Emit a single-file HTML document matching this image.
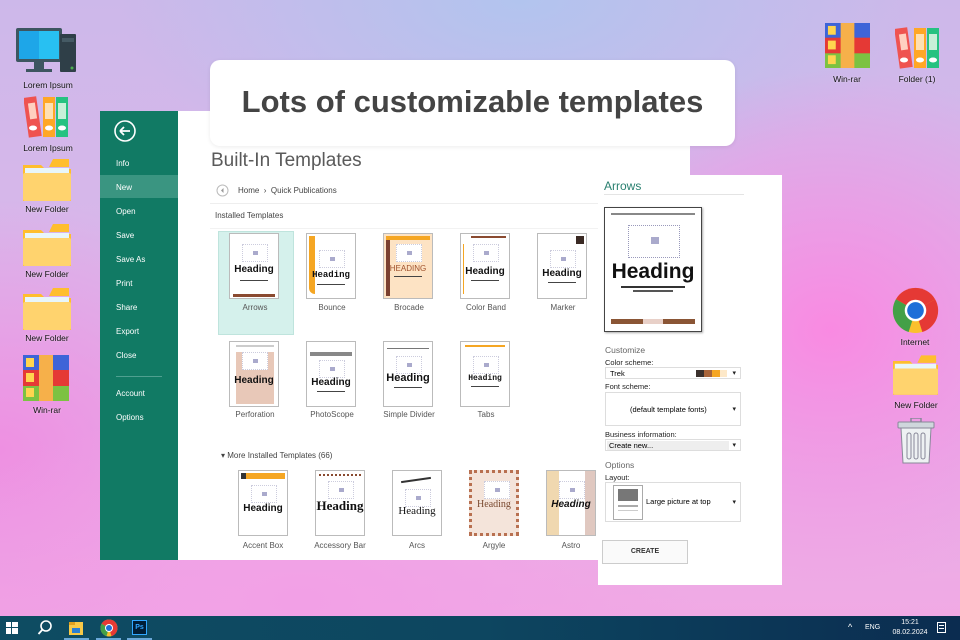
<!DOCTYPE html>
<html><head><meta charset="utf-8"><style>
*{margin:0;padding:0;box-sizing:border-box}
body{width:960px;height:640px;overflow:hidden;position:relative;font-family:"Liberation Sans",sans-serif;
background:
radial-gradient(ellipse 300px 260px at 830px 330px,#f98ae2 0%,rgba(249,138,226,0) 100%),
radial-gradient(ellipse 400px 200px at 300px 600px,#f2a0e6 0%,rgba(242,160,230,0) 100%),
radial-gradient(ellipse 300px 250px at 0px 450px,#ee90e2 0%,rgba(238,144,226,0) 100%),
radial-gradient(ellipse 400px 200px at 520px 0px,#b2c4ee 0%,rgba(178,196,238,0) 100%),
linear-gradient(180deg,#cdb8ea 0%,#dcb6ea 50%,#f2a8e4 100%);}
.abs{position:absolute}
.lbl{position:absolute;font-size:8.5px;color:#111;text-align:center;width:80px;text-shadow:0 0 2px rgba(255,255,255,.6)}
.side{left:100px;top:111px;width:78px;height:449px;background:#117a64}
.side div{position:absolute;left:16px;font-size:8px;color:#fff}
.main{left:178px;top:111px;width:512px;height:449px;background:#fff}
.t{position:absolute;width:50px;height:66px;border:1px solid #bbb;background:#fff;overflow:hidden}
.t .ph{position:absolute;left:12px;top:10px;width:26px;height:18px;border:1px dotted #ccd;}
.t .ph:after{content:"";position:absolute;left:10px;top:6px;width:5px;height:4px;background:#aac}
.t .h{position:absolute;left:0;right:0;top:30px;text-align:center;font-weight:bold;font-size:10px;font-family:"Liberation Sans Narrow","Liberation Sans",sans-serif;color:#111}
.t .s{position:absolute;left:10px;right:10px;top:44px;height:2px;background:#444}
.tl{position:absolute;width:76px;text-align:center;font-size:8px;color:#555}
.panel{left:598px;top:175px;width:184px;height:410px;background:#fff}
.pl{position:absolute;font-size:7.5px;color:#222}
.dd{position:absolute;border:1px solid #ddd;background:#fff}
.dd:after{content:"▾";position:absolute;right:4px;top:50%;transform:translateY(-50%);font-size:7px;color:#222}
</style></head><body>

<!-- desktop icons left -->
<svg class="abs" style="left:16px;top:26px" width="62" height="50" viewBox="0 0 62 50">
<rect x="0" y="2" width="46" height="34" rx="2" fill="#3d5560"/><rect x="3" y="5" width="40" height="28" fill="#1ea6e8"/><rect x="23" y="5" width="20" height="28" fill="#28c0f2"/>
<rect x="18" y="36" width="10" height="7" fill="#3d5560"/><rect x="10" y="43" width="26" height="3" fill="#3d5560"/>
<rect x="44" y="8" width="16" height="38" rx="1" fill="#2f3f48"/><rect x="46" y="12" width="12" height="4" fill="#455a64"/><circle cx="56" cy="42" r="1.5" fill="#4caf50"/></svg>
<div class="lbl" style="left:8px;top:80px">Lorem Ipsum</div>
<svg class="abs" style="left:24px;top:95px" width="46" height="44" viewBox="0 0 46 44">
<rect x="2" y="2" width="13" height="40" fill="#ef5350" transform="rotate(-8 8 22)"/><rect x="19" y="2" width="12" height="40" fill="#ffa726"/><rect x="32" y="2" width="12" height="40" fill="#26c281"/>
<rect x="21" y="8" width="8" height="16" fill="#ffe0b2"/><rect x="34" y="8" width="8" height="16" fill="#c8f0d8"/><rect x="5" y="8" width="7" height="16" fill="#ffd0c0" transform="rotate(-8 8 16)"/>
<ellipse cx="25" cy="33" rx="4" ry="2.5" fill="#fff"/><ellipse cx="38" cy="33" rx="4" ry="2.5" fill="#fff"/><ellipse cx="9" cy="33" rx="4" ry="2.5" fill="#fff"/></svg>
<div class="lbl" style="left:8px;top:143px">Lorem Ipsum</div>
<svg class="abs" style="left:23px;top:159px" width="48" height="42" viewBox="0 0 48 42"><path d="M0 6h18l4 4h26v32H0z" fill="#ffbe2e"/><path d="M30 0h16v8H26z" fill="#ffbe2e"/><rect x="2" y="9" width="44" height="6" fill="#e8f6fa"/><rect x="0" y="14" width="48" height="28" rx="2" fill="#ffd36e"/></svg>
<div class="lbl" style="left:7px;top:204px">New Folder</div>
<svg class="abs" style="left:23px;top:224px" width="48" height="42" viewBox="0 0 48 42"><path d="M0 6h18l4 4h26v32H0z" fill="#ffbe2e"/><path d="M30 0h16v8H26z" fill="#ffbe2e"/><rect x="2" y="9" width="44" height="6" fill="#e8f6fa"/><rect x="0" y="14" width="48" height="28" rx="2" fill="#ffd36e"/></svg>
<div class="lbl" style="left:7px;top:269px">New Folder</div>
<svg class="abs" style="left:23px;top:288px" width="48" height="42" viewBox="0 0 48 42"><path d="M0 6h18l4 4h26v32H0z" fill="#ffbe2e"/><path d="M30 0h16v8H26z" fill="#ffbe2e"/><rect x="2" y="9" width="44" height="6" fill="#e8f6fa"/><rect x="0" y="14" width="48" height="28" rx="2" fill="#ffd36e"/></svg>
<div class="lbl" style="left:7px;top:333px">New Folder</div>
<svg class="abs" style="left:23px;top:355px" width="46" height="46" viewBox="0 0 46 46"><rect width="46" height="46" fill="#e53935"/><rect width="46" height="15" fill="#3e64d8"/><rect y="31" width="46" height="15" fill="#7cc242"/><rect x="16" width="14" height="46" fill="#f6b04a"/><rect x="3" y="3" width="8" height="9" fill="#ffd54f"/><rect x="3" y="18" width="8" height="9" fill="#ffd54f"/><rect x="3" y="33" width="8" height="9" fill="#ffd54f"/></svg>
<div class="lbl" style="left:7px;top:405px">Win-rar</div>

<!-- right icons -->
<svg class="abs" style="left:825px;top:22px" width="45" height="47" viewBox="0 0 46 46"><rect width="46" height="46" fill="#e53935"/><rect width="46" height="15" fill="#3e64d8"/><rect y="31" width="46" height="15" fill="#7cc242"/><rect x="16" width="14" height="46" fill="#f6b04a"/><rect x="3" y="3" width="8" height="9" fill="#ffd54f"/><rect x="3" y="18" width="8" height="9" fill="#ffd54f"/><rect x="3" y="33" width="8" height="9" fill="#ffd54f"/></svg>
<div class="lbl" style="left:807px;top:74px">Win-rar</div>
<svg class="abs" style="left:895px;top:26px" width="46" height="44" viewBox="0 0 46 44">
<rect x="2" y="2" width="13" height="40" fill="#ef5350" transform="rotate(-8 8 22)"/><rect x="19" y="2" width="12" height="40" fill="#ffa726"/><rect x="32" y="2" width="12" height="40" fill="#26c281"/>
<rect x="21" y="8" width="8" height="16" fill="#ffe0b2"/><rect x="34" y="8" width="8" height="16" fill="#c8f0d8"/><rect x="5" y="8" width="7" height="16" fill="#ffd0c0" transform="rotate(-8 8 16)"/>
<ellipse cx="25" cy="34" rx="4" ry="2.5" fill="#fff"/><ellipse cx="38" cy="34" rx="4" ry="2.5" fill="#fff"/><ellipse cx="9" cy="34" rx="4" ry="2.5" fill="#fff"/></svg>
<div class="lbl" style="left:877px;top:74px">Folder (1)</div>
<svg class="abs" style="left:892px;top:287px" width="47" height="47" viewBox="-24 -24 48 48">
<circle r="23" fill="#fbc02d"/><path d="M0 0 L-20 -11.5 A23 23 0 0 1 20 -11.5Z" fill="#e53935"/><path d="M0 0 L20 -11.5 A23 23 0 0 1 7 22Z" fill="#e53935"/><path d="M0 0 L-20 -11.5 A23 23 0 0 0 -7 22Z" fill="#43a047"/><circle r="11" fill="#fff"/><circle r="8.5" fill="#1e6fd8"/></svg>
<div class="lbl" style="left:875px;top:337px">Internet</div>
<svg class="abs" style="left:893px;top:353px" width="45" height="44" viewBox="0 0 48 42"><path d="M0 6h18l4 4h26v32H0z" fill="#ffbe2e"/><path d="M30 0h16v8H26z" fill="#ffbe2e"/><rect x="2" y="9" width="44" height="6" fill="#e8f6fa"/><rect x="0" y="14" width="48" height="28" rx="2" fill="#ffd36e"/></svg>
<div class="lbl" style="left:876px;top:400px">New Folder</div>
<svg class="abs" style="left:897px;top:418px" width="38" height="46" viewBox="0 0 38 46"><rect x="14" y="0" width="10" height="4" fill="none" stroke="#889" stroke-width="1.5"/><rect x="1" y="4" width="36" height="6" rx="1" fill="#cfd6dc" stroke="#889"/><path d="M4 10h30l-2 35H6z" fill="#eef1f3" stroke="#889"/><rect x="10" y="15" width="4" height="26" rx="2" fill="none" stroke="#889"/><rect x="17" y="15" width="4" height="26" rx="2" fill="none" stroke="#889"/><rect x="24" y="15" width="4" height="26" rx="2" fill="none" stroke="#889"/></svg>

<!-- publisher window -->
<div class="abs side">
<svg class="abs" style="left:14px;top:9px" width="22" height="22" viewBox="0 0 22 22"><circle cx="11" cy="11" r="10" fill="none" stroke="#fff" stroke-width="1.6"/><path d="M6 11h10M6 11l4-4M6 11l4 4" stroke="#fff" stroke-width="1.8" fill="none"/></svg>
<div style="top:48px">Info</div>
<div style="left:0;top:64px;width:78px;height:23px;background:#3a9581"></div>
<div style="top:72px">New</div>
<div style="top:96px">Open</div>
<div style="top:120px">Save</div>
<div style="top:144px">Save As</div>
<div style="top:168px">Print</div>
<div style="top:192px">Share</div>
<div style="top:216px">Export</div>
<div style="top:240px">Close</div>
<div style="left:16px;top:265px;width:46px;height:1px;background:#4fa090"></div>
<div style="top:278px">Account</div>
<div style="top:302px">Options</div>
</div>
<div class="abs main"></div>
<div class="abs" style="left:211px;top:150px;font-size:19px;color:#5a5a5a">Built-In Templates</div>
<svg class="abs" style="left:216px;top:184px" width="13" height="13"><circle cx="6.5" cy="6.5" r="5.5" fill="none" stroke="#bbb"/><path d="M7.5 4L5 6.5 7.5 9z" fill="#999"/></svg>
<div class="abs" style="left:238px;top:186px;font-size:8px;color:#444">Home &nbsp;›&nbsp; Quick Publications</div>
<div class="abs" style="left:210px;top:203px;width:480px;height:1px;background:#eee"></div>
<div class="abs" style="left:215px;top:211px;font-size:8px;color:#444">Installed Templates</div>
<div class="abs" style="left:210px;top:228px;width:480px;height:1px;background:#f2f2f2"></div>
<div class="abs" style="left:218px;top:231px;width:76px;height:104px;background:#d5f1ec;border:1px solid #bfe4dd"></div>

<div class="t" style="left:229px;top:233px"><div class="ph"></div><div class="h">Heading</div><div class="s" style="top:46px;height:1px"></div><div style="position:absolute;left:3px;right:3px;top:60px;height:3px;background:#8a4a30"></div></div>
<div class="tl" style="left:217px;top:303px">Arrows</div>
<div class="t" style="left:306px;top:233px"><div style="position:absolute;left:2px;top:2px;width:6px;height:58px;background:#f5a623;border-radius:0 0 0 20px"></div><div class="ph" style="top:16px"></div><div class="h" style="top:36px;font-size:9px;font-family:'Liberation Mono',monospace">Heading</div><div class="s" style="top:50px;height:1px"></div></div>
<div class="tl" style="left:294px;top:303px">Bounce</div>
<div class="t" style="left:383px;top:233px;background:#fde3c4"><div style="position:absolute;left:2px;top:2px;width:4px;height:60px;background:#7a4030"></div><div style="position:absolute;left:2px;top:2px;right:2px;height:4px;background:#f5a623"></div><div class="ph" style="background:#fff"></div><div class="h" style="top:30px;font-weight:normal;font-size:8px;color:#a0522d">HEADING</div><div class="s" style="top:42px;height:1px"></div></div>
<div class="tl" style="left:371px;top:303px">Brocade</div>
<div class="t" style="left:460px;top:233px"><div style="position:absolute;left:10px;right:3px;top:2px;height:2px;background:#8a4a30"></div><div style="position:absolute;left:2px;top:10px;width:1px;height:50px;background:#f5a623"></div><div class="ph"></div><div class="h" style="top:32px">Heading</div><div class="s" style="top:46px;height:1px"></div></div>
<div class="tl" style="left:448px;top:303px">Color Band</div>
<div class="t" style="left:537px;top:233px"><div style="position:absolute;right:2px;top:2px;width:8px;height:8px;background:#3a2a24"></div><div class="ph" style="top:16px"></div><div class="h" style="top:34px">Heading</div><div class="s" style="top:48px;height:1px"></div></div>
<div class="tl" style="left:525px;top:303px">Marker</div>

<div class="t" style="left:229px;top:341px"><div style="position:absolute;left:6px;right:4px;top:10px;height:52px;background:#e8c8b8"></div><div style="position:absolute;left:6px;right:4px;top:3px;height:2px;background:#ccc"></div><div class="ph" style="background:#fff"></div><div class="h" style="top:33px">Heading</div></div>
<div class="tl" style="left:217px;top:410px">Perforation</div>
<div class="t" style="left:306px;top:341px"><div style="position:absolute;left:3px;right:3px;top:10px;height:4px;background:#888"></div><div class="ph" style="top:18px"></div><div class="h" style="top:35px">Heading</div><div class="s" style="top:49px;height:1px"></div></div>
<div class="tl" style="left:294px;top:410px">PhotoScope</div>
<div class="t" style="left:383px;top:341px"><div style="position:absolute;left:3px;right:3px;top:6px;height:1px;background:#777"></div><div class="ph" style="top:14px"></div><div class="h" style="top:30px;font-size:11px">Heading</div><div class="s" style="top:45px;height:1px"></div></div>
<div class="tl" style="left:371px;top:410px">Simple Divider</div>
<div class="t" style="left:460px;top:341px"><div style="position:absolute;left:4px;right:4px;top:3px;height:2px;background:#f5a623"></div><div class="ph" style="top:14px"></div><div class="h" style="top:32px;font-size:8px;font-family:'Liberation Mono',monospace">Heading</div><div class="s" style="top:44px;height:1px"></div></div>
<div class="tl" style="left:448px;top:410px">Tabs</div>

<div class="abs" style="left:221px;top:451px;font-size:8px;color:#444">▾ More Installed Templates (66)</div>
<div class="t" style="left:238px;top:470px"><div style="position:absolute;left:2px;right:2px;top:2px;height:6px;background:#f5a623"></div><div style="position:absolute;left:2px;top:2px;width:5px;height:6px;background:#333"></div><div class="ph" style="top:14px"></div><div class="h" style="top:32px">Heading</div></div>
<div class="tl" style="left:225px;top:541px">Accent Box</div>
<div class="t" style="left:315px;top:470px"><div style="position:absolute;left:3px;right:3px;top:3px;height:2px;border-top:2px dotted #8a4a30"></div><div class="ph" style="top:10px"></div><div class="h" style="top:27px;font-size:13px;font-family:'Liberation Serif',serif">Heading</div></div>
<div class="tl" style="left:302px;top:541px">Accessory Bar</div>
<div class="t" style="left:392px;top:470px"><div style="position:absolute;left:8px;right:10px;top:8px;height:2px;background:#333;transform:rotate(-8deg)"></div><div class="ph" style="top:18px"></div><div class="h" style="top:34px;font-weight:normal;font-size:11px;font-family:'Liberation Serif',serif">Heading</div></div>
<div class="tl" style="left:379px;top:541px">Arcs</div>
<div class="t" style="left:469px;top:470px;background:#f4e4da;border:3px dotted #b87050"><div class="ph" style="top:8px;background:#fff"></div><div class="h" style="top:26px;font-weight:normal;font-size:10px;font-family:'Liberation Serif',serif;color:#7a4a30">Heading</div></div>
<div class="tl" style="left:456px;top:541px">Argyle</div>
<div class="t" style="left:546px;top:470px;background:#fff"><div style="position:absolute;left:0;top:0;width:12px;height:66px;background:#f0d8b0"></div><div style="position:absolute;right:0;top:0;width:10px;height:66px;background:#e0c8c0"></div><div class="ph"></div><div class="h" style="top:28px;font-style:italic">Heading</div></div>
<div class="tl" style="left:533px;top:541px">Astro</div>

<!-- right panel -->
<div class="abs panel">
<div class="abs" style="left:6px;top:4px;font-size:12px;color:#2a8070">Arrows</div>
<div class="abs" style="left:6px;top:19px;width:140px;height:1px;background:#e4e4e4"></div>
<div class="abs" style="left:6px;top:32px;width:98px;height:125px;border:1.5px solid #444;box-shadow:1px 1px 2px #aaa;background:#fff">
<div class="abs" style="left:6px;top:5px;width:84px;height:1.5px;background:#888"></div>
<div class="abs" style="left:23px;top:17px;width:52px;height:33px;border:1px dotted #99b"></div>
<div class="abs" style="left:46px;top:29px;width:8px;height:7px;background:#aac"></div>
<div class="abs" style="left:0;width:96px;top:52px;text-align:center;font-weight:bold;font-size:21px;font-family:'Liberation Sans Narrow','Liberation Sans',sans-serif;color:#111">Heading</div>
<div class="abs" style="left:16px;width:64px;top:78px;height:2px;background:#333"></div>
<div class="abs" style="left:28px;width:40px;top:82px;height:1.5px;background:#555"></div>
<div class="abs" style="left:6px;width:84px;top:111px;height:5px;background:#8a5535"></div>
<div class="abs" style="left:38px;width:20px;top:111px;height:5px;background:#e8d0c8"></div>
</div>
<div class="pl" style="left:7px;top:170px;font-size:8.5px;color:#666">Customize</div>
<div class="pl" style="left:7px;top:183px">Color scheme:</div>
<div class="dd" style="left:7px;top:192px;width:136px;height:12px"><span style="position:absolute;left:4px;top:1px;font-size:7.5px">Trek</span><span style="position:absolute;left:90px;top:2px;width:8px;height:7px;background:#3a302c"></span><span style="position:absolute;left:98px;top:2px;width:8px;height:7px;background:#a8643a"></span><span style="position:absolute;left:106px;top:2px;width:8px;height:7px;background:#f5a623"></span><span style="position:absolute;left:114px;top:2px;width:7px;height:7px;background:#fde8c8"></span></div>
<div class="pl" style="left:7px;top:207px">Font scheme:</div>
<div class="dd" style="left:7px;top:217px;width:136px;height:34px"><span style="position:absolute;left:24px;top:12px;font-size:7.5px">(default template fonts)</span></div>
<div class="pl" style="left:7px;top:255px">Business information:</div>
<div class="dd" style="left:7px;top:264px;width:136px;height:12px"><span style="position:absolute;left:1px;top:1px;width:122px;height:9px;background:#eee;font-size:7.5px;padding-left:2px">Create new...</span></div>
<div class="pl" style="left:7px;top:285px;font-size:8.5px;color:#666">Options</div>
<div class="pl" style="left:7px;top:298px">Layout:</div>
<div class="dd" style="left:7px;top:307px;width:136px;height:40px">
<div class="abs" style="left:7px;top:2px;width:30px;height:35px;border:1px solid #aaa"><div class="abs" style="left:4px;top:3px;width:20px;height:12px;background:#777"></div><div class="abs" style="left:4px;top:19px;width:20px;height:2px;background:#aaa"></div><div class="abs" style="left:4px;top:24px;width:20px;height:1px;background:#ccc"></div></div>
<span style="position:absolute;left:40px;top:14px;font-size:7.5px">Large picture at top</span></div>
<div class="abs" style="left:4px;top:365px;width:86px;height:24px;border:1px solid #ccc;background:#fafafa;text-align:center;line-height:22px;font-size:7px;font-weight:bold;color:#333">CREATE</div>
</div>

<!-- title card -->
<div class="abs" style="left:210px;top:60px;width:525px;height:86px;background:#fff;border-radius:10px;text-align:center;line-height:84px;font-size:31px;font-weight:bold;color:#444;box-shadow:0 1px 4px rgba(0,0,0,.08)">Lots of customizable templates</div>

<!-- taskbar -->
<div class="abs" style="left:0;top:616px;width:960px;height:24px;background:linear-gradient(90deg,#0e4c62,#0d4660 50%,#0b2c50)">
<svg class="abs" style="left:6px;top:6px" width="12" height="12"><rect x="0" y="0" width="5" height="5" fill="#fff"/><rect x="6" y="0" width="6" height="5" fill="#fff"/><rect x="0" y="6" width="5" height="6" fill="#fff"/><rect x="6" y="6" width="6" height="6" fill="#fff"/></svg>
<svg class="abs" style="left:37px;top:4px" width="16" height="16"><circle cx="9" cy="6" r="5" fill="none" stroke="#fff" stroke-width="1.6"/><path d="M5.5 9.5L1.5 14" stroke="#fff" stroke-width="1.8"/></svg>
<svg class="abs" style="left:68px;top:4px" width="16" height="16"><rect x="1" y="2" width="14" height="13" fill="#f7c948"/><rect x="1" y="2" width="6" height="3" fill="#e0a020"/><rect x="4" y="8" width="8" height="5" fill="#2a7fd4"/></svg>
<svg class="abs" style="left:100px;top:3px" width="18" height="18" viewBox="-9 -9 18 18"><circle r="8.5" fill="#fbc02d"/><path d="M0 0L-7.4-4.2A8.5 8.5 0 0 1 7.4-4.2Z" fill="#e53935"/><path d="M0 0L7.4-4.2A8.5 8.5 0 0 1 2.5 8.1Z" fill="#e53935"/><path d="M0 0L-7.4-4.2A8.5 8.5 0 0 0-2.5 8.1Z" fill="#43a047"/><circle r="4" fill="#fff"/><circle r="3" fill="#1e6fd8"/></svg>
<div class="abs" style="left:132px;top:4px;width:15px;height:15px;background:#001e36;border:1px solid #31a8ff;color:#31a8ff;font-size:7px;font-weight:bold;text-align:center;line-height:13px">Ps</div>
<div class="abs" style="left:64px;top:22px;width:25px;height:2px;background:#6aa8d8"></div>
<div class="abs" style="left:96px;top:22px;width:25px;height:2px;background:#6aa8d8"></div>
<div class="abs" style="left:127px;top:22px;width:25px;height:2px;background:#6aa8d8"></div>
<div class="abs" style="left:848px;top:6px;font-size:9px;color:#fff">^</div>
<div class="abs" style="left:865px;top:8px;font-size:7px;color:#fff">ENG</div>
<div class="abs" style="left:890px;top:2px;font-size:7px;color:#fff;text-align:center;width:40px;line-height:10px">15:21<br>08.02.2024</div>
<svg class="abs" style="left:937px;top:6px" width="10" height="12"><rect x="0.5" y="0.5" width="8" height="10" fill="none" stroke="#fff"/><rect x="2" y="3" width="5" height="1" fill="#fff"/><rect x="2" y="6" width="5" height="1" fill="#fff"/></svg>
</div>
</body></html>
